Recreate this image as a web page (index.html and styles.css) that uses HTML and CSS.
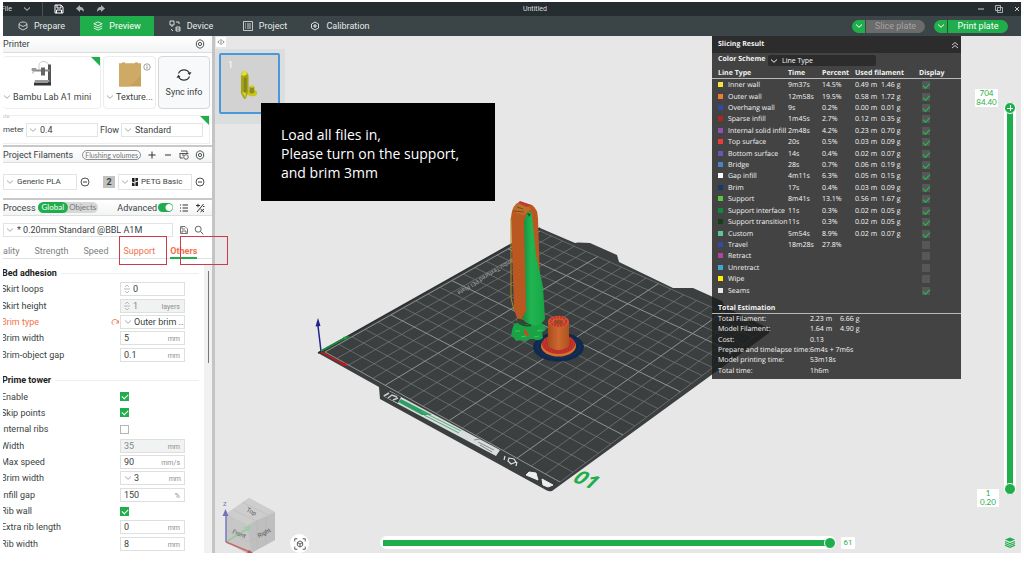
FILE: index.html
```html
<!DOCTYPE html>
<html lang="en">
<head>
<meta charset="utf-8">
<title>Untitled</title>
<link rel="stylesheet" href="styles.css">
</head>
<body>
<svg class="defs" aria-hidden="true">
  <symbol id="chev" viewBox="0 0 8 8"><path d="M1 2.5 4 5.3 7 2.5" fill="none" stroke="currentColor"/></symbol>
  <symbol id="minus-circle" viewBox="0 0 10 10"><circle cx="5" cy="5" r="4" fill="none" stroke="currentColor" stroke-width=".9"/><path d="M3 5h4" stroke="currentColor"/></symbol>
  <symbol id="gear" viewBox="0 0 10 10"><path d="M3.6 1.3 5 .7l1.4.6 1.5.9.7 1.3v3l-.7 1.3-1.5.9L5 9.3l-1.4-.6-1.5-.9-.7-1.3v-3l.7-1.3z" fill="none" stroke="currentColor" stroke-width=".9"/><circle cx="5" cy="5" r="1.6" fill="none" stroke="currentColor" stroke-width=".9"/></symbol>
  <symbol id="layers" viewBox="0 0 12 12"><path d="m6 1 5 2.3-5 2.3-5-2.3zM1 6l5 2.3L11 6M1 8.600l5 2.300 5-2.300" fill="none" stroke="currentColor" stroke-width="1"/></symbol>
  <symbol id="spin" viewBox="0 0 6 12"><path d="m1 4 2-2 2 2M0 6h6M1 8l2 2 2-2" fill="none" stroke="currentColor" stroke-width=".8"/></symbol>
</svg>
<div class="app">
  <header class="titlebar">
    <button class="file">File <svg class="i8"><use href="#chev"/></svg></button>
    <span class="sep"></span>
    <button aria-label="Save"><svg class="i10" viewBox="0 0 10 10"><path d="M1 1h6l2 2v6H1zM3 1v3h4V1M2.500 9V6h5v3" fill="none" stroke="#fff"/></svg></button>
    <button aria-label="Undo"><svg class="i10" viewBox="0 0 10 10"><path d="M1 4.500 5 1v2c3 0 4 2 4 5C8 6.500 7 6 5 6v2z" fill="#aab0b2"/></svg></button>
    <button aria-label="Redo"><svg class="i10" viewBox="0 0 10 10"><path d="M9 4.500 5 1v2C2 3 1 5 1 8c1-1.500 2-2 4-2v2z" fill="#aab0b2"/></svg></button>
    <h1>Untitled</h1>
    <span class="win">
      <button aria-label="Minimize"><svg class="i8" viewBox="0 0 8 8"><path d="M1 4h6" stroke="#ccc"/></svg></button>
      <button aria-label="Restore"><svg class="i8" viewBox="0 0 8 8"><path d="M.5.5h5v5h-5zM2.500 2.500h5v5h-5z" fill="none" stroke="#ccc" stroke-width=".8"/></svg></button>
      <button aria-label="Close"><svg class="i8" viewBox="0 0 8 8"><path d="m2 2 4 4M6 2 2 6" stroke="#ccc"/></svg></button>
    </span>
  </header>
  <nav class="tabs">
    <button><svg class="i10" viewBox="0 0 10 10"><path d="M5 1c2 0 4 1 4 2v4L5 9 1 7V3c0-1 2-2 4-2zM1 3.500l4 2 4-2" fill="none" stroke="currentColor" stroke-width=".8"/></svg>Prepare</button>
    <button class="on"><svg class="i10"><use href="#layers"/></svg>Preview</button>
    <button><svg class="i12" viewBox="0 0 12 12"><path d="M1 1h4v4H1zM3 5v2M7 2h3v2M2 9l2 2M7 7h4v4H7zM7 9h4" fill="none" stroke="currentColor" stroke-width=".9"/></svg>Device</button>
    <button><svg class="i10" viewBox="0 0 10 10"><path d="M.5.5h9v9h-9zM2 3h1M2 5h1M2 7h1M4 3h4M4 5h4M4 7h4" fill="none" stroke="currentColor" stroke-width=".8"/></svg>Project</button>
    <button><svg class="i10" viewBox="0 0 10 10"><path d="m5 1 3.500 2v4L5 9 1.500 7V3z" fill="none" stroke="currentColor" stroke-width=".9"/><path d="M5 3v4M3 5h4" stroke="currentColor"/></svg>Calibration</button>
    <div class="split off"><button aria-label="Slice options"><svg class="i8"><use href="#chev"/></svg></button><button>Slice plate</button></div>
    <div class="split"><button aria-label="Print options"><svg class="i8"><use href="#chev"/></svg></button><button>Print plate</button></div>
  </nav>
  <main>
    <aside>
      <div class="bar"><h2>Printer</h2><button class="end" aria-label="Printer settings"><svg class="i10"><use href="#gear"/></svg></button></div>
      <div class="cards">
        <button class="card printer">
          <svg class="pic" viewBox="0 0 26 28"><path d="M8 9V5q0-4 5-4 4 0 5 4" fill="none" stroke="#ccc"/><path d="M17 4h3v20h-3z" fill="#555"/><path d="M2 9h17v2H2z" fill="#888"/><path d="M10 7h4v8h-4z" fill="#666"/><path d="M3 22h17v3H3z" fill="#333"/><path d="M1 8h4v2H1zM4 20h14v1H4zM2 11v2" fill="#999" stroke="#999"/></svg>
          <span><svg class="i8"><use href="#chev"/></svg>Bambu Lab A1 mini</span><i class="corner"></i>
        </button>
        <button class="card plate">
          <svg class="pic" viewBox="0 0 26 28"><path d="M2 3h3V2h3v1h10V2h3v1h3v23H2z" fill="#c6a15a"/><path d="M2 3h22v12L12 26H2z" fill="#cfaa64"/></svg>
          <svg class="info" viewBox="0 0 8 8"><circle cx="4" cy="4" r="3.200" fill="none" stroke="#777" stroke-width=".7"/><path d="M4 3.500v2.200M4 2v.8" stroke="#666" stroke-width=".8"/></svg>
          <span><svg class="i8"><use href="#chev"/></svg>Texture...</span>
        </button>
        <button class="card sync"><svg class="i16" viewBox="0 0 16 16"><path d="M2.500 6.500a6 6 0 0 1 11 0M13.500 9.500a6 6 0 0 1-11 0" fill="none" stroke="#333" stroke-width="1.200"/><path d="m15.500 5-1.800 3.200L11.500 6zM.5 11l1.800-3.200L4.500 10z" fill="#333"/></svg>Sync info</button>
      </div>
      <div class="nozzle">
        <span class="legend">de</span>
        <label for="dia">meter</label><div class="combo"><svg class="i8"><use href="#chev"/></svg><select id="dia"><option>0.4</option></select></div>
        <label for="flow">Flow</label><div class="combo"><svg class="i8"><use href="#chev"/></svg><select id="flow"><option>Standard</option></select></div>
        <i class="corner"></i>
      </div>
      <div class="bar thick"><h2>Project Filaments</h2><button class="pill end">Flushing volumes</button>
        <button aria-label="Add filament"><svg class="i10" viewBox="0 0 10 10"><path d="M5 1.500v7M1.500 5h7" stroke="#333"/></svg></button>
        <button aria-label="Remove filament"><svg class="i10" viewBox="0 0 10 10"><path d="M2 5h6" stroke="#333"/></svg></button>
        <button aria-label="AMS sync"><svg class="i10" viewBox="0 0 10 10"><path d="M2 1h6v2M.5 3.500h9M1 3.500V8h3M3 5h2" fill="none" stroke="#444" stroke-width=".9"/><circle cx="7" cy="7" r="2.300" fill="none" stroke="#444" stroke-width=".8"/></svg></button>
        <button aria-label="Filament settings"><svg class="i10"><use href="#gear"/></svg></button></div>
      <div class="fils">
        <div class="combo"><svg class="i8"><use href="#chev"/></svg><select aria-label="Filament 1"><option>Generic PLA</option></select></div>
        <button aria-label="Remove 1"><svg class="i10"><use href="#minus-circle"/></svg></button>
        <b>2</b>
        <div class="combo"><svg class="i8"><use href="#chev"/></svg><svg class="logo" viewBox="0 0 6 8"><path d="M0 0h2.600v4.500L0 3.500zM3.400 0H6v2.500l-2.600 1zM0 4.500l2.600 1V8H0zM3.400 4.500 6 3.500V8H3.400z" fill="#222"/></svg><select aria-label="Filament 2"><option>PETG Basic</option></select></div>
        <button aria-label="Remove 2"><svg class="i10"><use href="#minus-circle"/></svg></button>
      </div>
      <div class="bar thick"><h2>Process</h2><div class="seg"><button class="on">Global</button><button>Objects</button></div>
        <label class="adv end">Advanced<input type="checkbox" class="switch" checked></label>
        <button aria-label="List"><svg class="i10" viewBox="0 0 10 10"><path d="M1 2h1M1 5h1M1 8h1M3.500 2H9M3.500 5H9M3.500 8H9" stroke="#333"/></svg></button>
        <button aria-label="Compare"><svg class="i10" viewBox="0 0 10 10"><path d="M8.500 1 2 9M1 2.500h4M3 .8v3.500M5.500 6l3.500 3M9 6 5.500 9M8 3.500h1.500" stroke="#333"/></svg></button></div>
      <div class="preset"><div class="combo"><svg class="i8"><use href="#chev"/></svg><select aria-label="Process preset"><option>* 0.20mm Standard @BBL A1M</option></select></div>
        <button aria-label="Save preset"><svg class="i8" viewBox="0 0 8 8"><path d="M.5.5H5l2.500 2.500v4.500h-7zM2 .5V3h3M2 7.500V5h4v2.500" fill="none" stroke="#555" stroke-width=".8"/></svg></button>
        <button aria-label="Search"><svg class="i10" viewBox="0 0 10 10"><circle cx="4.200" cy="4.200" r="3" fill="none" stroke="#555" stroke-width=".9"/><path d="m6.500 6.500 2.800 2.800" stroke="#555"/></svg></button></div>
      <div class="ptabs"><button>ality</button><button>Strength</button><button>Speed</button><button class="mod">Support</button><button class="mod cur">Others</button></div>
      <div class="params">
        <div class="plist">
          <section class="g1">
            <h3>Bed adhesion</h3>
            <div class="row"><label for="a1">Skirt loops</label><div class="val"><svg class="spin"><use href="#spin"/></svg><input id="a1" value="0"></div></div>
            <div class="row"><label for="a2">Skirt height</label><div class="val dis"><svg class="spin"><use href="#spin"/></svg><input id="a2" value="1" disabled><span>layers</span></div></div>
            <div class="row mod"><label for="a3">Brim type</label><button class="reset" aria-label="Reset"><svg class="i8" viewBox="0 0 8 8"><path d="M2.500 7A3 3 0 1 1 7 4.500M7.500 2.500V5H5" fill="none" stroke="currentColor" stroke-width=".9"/></svg></button><div class="val drop"><svg class="i8"><use href="#chev"/></svg><select id="a3"><option>Outer brim ...</option></select></div></div>
            <div class="row"><label for="a4">Brim width</label><div class="val"><input id="a4" value="5"><span>mm</span></div></div>
            <div class="row"><label for="a5">Brim-object gap</label><div class="val"><input id="a5" value="0.1"><span>mm</span></div></div>
          </section>
          <section class="g2">
            <h3>Prime tower</h3>
            <div class="row"><label for="b1">Enable</label><input type="checkbox" id="b1" checked></div>
            <div class="row"><label for="b2">Skip points</label><input type="checkbox" id="b2" checked></div>
            <div class="row"><label for="b3">Internal ribs</label><input type="checkbox" id="b3"></div>
            <div class="row"><label for="b4">Width</label><div class="val dis"><input id="b4" value="35" disabled><span>mm</span></div></div>
            <div class="row"><label for="b5">Max speed</label><div class="val"><input id="b5" value="90"><span>mm/s</span></div></div>
            <div class="row"><label for="b6">Brim width</label><div class="val drop"><svg class="i8"><use href="#chev"/></svg><input id="b6" value="3"><span>mm</span></div></div>
            <div class="row"><label for="b7">Infill gap</label><div class="val"><input id="b7" value="150"><span>%</span></div></div>
            <div class="row"><label for="b8">Rib wall</label><input type="checkbox" id="b8" checked></div>
            <div class="row"><label for="b9">Extra rib length</label><div class="val"><input id="b9" value="0"><span>mm</span></div></div>
            <div class="row"><label for="b10">Rib width</label><div class="val"><input id="b10" value="8"><span>mm</span></div></div>
          </section>
        </div>
        <div class="scroll"><i></i></div>
      </div>
    </aside>
    <div class="view">
      <svg class="scene" viewBox="215 36 806 517" preserveAspectRatio="xMinYMin meet">
        <defs>
          <pattern id="hatch" width="3" height="3" patternUnits="userSpaceOnUse" patternTransform="rotate(35)"><rect width="3" height="3" fill="#bf5a22"/><path d="M0 1h3" stroke="#a84c1a" stroke-width=".7"/></pattern>
          <pattern id="hatchr" width="2.400" height="3" patternUnits="userSpaceOnUse" patternTransform="rotate(15)"><rect width="3" height="3" fill="#d0342c"/><path d="M1 0v3" stroke="#8f2a24" stroke-width=".8"/></pattern>
          <linearGradient id="grn"><stop offset="0" stop-color="#128a3c"/><stop offset=".4" stop-color="#21b552"/><stop offset="1" stop-color="#17a546"/></linearGradient>
          <linearGradient id="cyl"><stop offset="0" stop-color="#a84d1c"/><stop offset=".5" stop-color="#cd6830"/><stop offset="1" stop-color="#b0521f"/></linearGradient>
        </defs>
        <path d="m318 353 222-125 35 15 3-.5 12 .5 27 12 2 7 54 26h20l29 13 3 6 45 22-1 4-217 158q-3 1-6-1L380 399l-1-12z" fill="#3b3f40"/>
        <g id="grid" fill="none"></g>
        <path d="m318 353 222-125" stroke="#2c2f30" stroke-width="1.500"/>
        <text class="platetext" transform="translate(516 256) rotate(149)">Bambu Textured PEI Plate</text>
        <g><path d="m383 396 7-5 110 59-4 6z" fill="#d9dddd"/><path d="m383 396 6-5 12 6-3 6z" fill="#3b3f40"/><path d="m384 396 5-3M388 398l4-3 5 2M393 400l5-2" stroke="#ccc" stroke-width="1.500" fill="none"/><path d="m401 399 31 16-10 0-24-13z" fill="#2f9e63"/><path d="m421 411 40 20M424 415l35 18" stroke="#58a97c" stroke-width="1"/><path d="m474 440 6-1M478 442l16 8M480 445l12 7" stroke="#888" stroke-width="1"/><path d="m505 456-1 4M517 462l-1 4M509 458l5 1 2 3-5 2-3-3z" fill="none" stroke="#ddd" stroke-width="1.200"/><path d="m529 472 7 1 2 7-12-5zM542 479l11 6-5 2-5-2z" fill="#eee" stroke="#eee" stroke-linejoin="round"/></g>
        <text class="plateno" transform="translate(571 481) rotate(22) skewX(-22)">01</text>
        <path d="M321 351 318 326" stroke="#22228c" stroke-width="1.500"/><path d="m318 318 2.500 8-5 .5z" fill="#22228c"/>
        <path d="m321 351 24-13" stroke="#16913c" stroke-width="1.500"/><path d="m350 336-5 4-2-3z" fill="#16a53f"/>
        <path d="m321 352 22 12" stroke="#c8161b" stroke-width="1.500"/><path d="m348 366-6 0 2-4z" fill="#c8161b"/>
        <ellipse cx="558.500" cy="347" rx="25.500" ry="14.500" fill="#10294d"/><ellipse cx="558.500" cy="347" rx="21" ry="11" fill="none" stroke="#163866" stroke-width=".7"/>
        <ellipse cx="558.500" cy="346" rx="17.500" ry="10.500" fill="#d9702e"/><ellipse cx="558.500" cy="344" rx="16.500" ry="10" fill="url(#hatchr)"/>
        <path d="M548 321v25q10 8 21 0v-25z" fill="url(#cyl)"/><ellipse cx="558.500" cy="321.500" rx="10.500" ry="5.800" fill="#d45a2f"/><ellipse cx="558.500" cy="321.500" rx="7.800" ry="4.200" fill="none" stroke="#c6283a" stroke-width="2" stroke-dasharray="2 1"/><ellipse cx="558.500" cy="322" rx="5" ry="2.600" fill="#9a4a22"/>
        <path d="M511 218q1-15 10-16l11 3q6 4 6 14l2 61-10 42-13-4-3-9z" fill="url(#hatch)"/>
        <path d="M511 218v80l3 12" fill="none" stroke="#a98a2b"/>
        <path d="m513 209 4-6 7 0 7 6-7 6-8-2z" fill="#b8702c"/><path d="m518 203 9 4 4-2-11-4z" fill="#c13831"/><path d="m514 211 10 1M517 207l6 2" stroke="#7f481e"/>
        <path d="m516 318 3 5 16 4-4 9-7-1-6-9z" fill="#b75420"/>
        <path d="M514 324q6-3 9 0l4 0q8-4 16 0l3 4q-1 4-4 4l1 6q-5 4-9 1l-5 0q-3 4-7 1l-6 1-2-3-3-2 1-6z" fill="#19a246"/><path d="m524 328 5 6-1 3-4-3z" fill="#b75420"/>
        <path d="m524 220 4-8q3-1 4 3l4 40 7 32 2 32q-5 8-12 6l-8-3-3-5q5-5 4-10z" fill="url(#grn)"/><path d="m527 213 4 1-2 3z" fill="#145c2c"/><path d="M517 321q6 6 14 4" stroke="#26502f" fill="none" stroke-width="2"/>
        <path d="m515 331 5 0M521 337l5-1M537 331l5-1M534 337l5-1" stroke="#38c968"/>
        <g><path d="m249 498 26 14v28l-24 13h-5l-20-11V514z" fill="#c6c6c6"/><path d="m249 498 26 14-27 13-22-11z" fill="#cdcdcd"/><path d="m248 525 27-13v28l-24 13z" fill="#bfbfbf"/><path d="m233 510 26 12M242 502l26 13M257 521v27M266 517v27M226 530l22 12 27-15" fill="none" stroke="#b7b7b7" stroke-width=".5"/>
        <path d="m226 542 21-13" stroke="#9ac7a0" stroke-width="1.500"/><path d="m251 526-3 6-4-5z" fill="#9acda2"/><path d="M226 542v-27" stroke="#7878c0" stroke-width="1.500"/><path d="m225.500 509 3 7h-6z" fill="#7373bd"/><path d="m226 542 24 10" stroke="#c86a6a" stroke-width="1.500"/><path d="m253 553-4-3-2 3z" fill="#c05050"/>
        <g class="cubetext"><text x="223" y="506" fill="#7373bd">Z</text><text x="252" y="525" fill="#a5cda9">Y</text><text transform="translate(246 511) rotate(28)">Top</text><text transform="translate(232 533) rotate(22)">Front</text><text transform="translate(259 538) rotate(-28)">Right</text></g></g>
      </svg>
      <button class="fold" aria-label="Collapse sidebar"><svg class="i8" viewBox="0 0 8 8"><path d="M4 1v6M2.500 2.500.8 4l1.700 1.500M5.500 2.500 7.200 4 5.500 5.500" fill="none" stroke="#888"/></svg></button>
      <div class="thumbs"><button class="thumb"><span>1</span><svg viewBox="0 0 60 60"><path d="M21 22q0-5 4-5 4 1 4 6v16l-3 7q-2 1-3-2l-2-4z" fill="#a5a318"/><path d="M21 21q2-5 5-4l2 3-4 2z" fill="#e2e030"/><path d="M24 24h3v15h-3z" fill="#87851c"/><path d="m22 39 4 1 0 5z" fill="#dedb22"/><ellipse cx="33" cy="40" rx="5" ry="3.500" fill="#c8c51d"/><path d="M30 33h5v7q-3 1-5 0z" fill="#8f8d1b"/><ellipse cx="32.500" cy="33" rx="2.500" ry="1.500" fill="#d9d625"/></svg></button></div>
      <section class="result">
        <header><h2>Slicing Result</h2><button aria-label="Collapse"><svg class="i8" viewBox="0 0 8 8"><path d="m1 4 3-2.500L7 4M1 7l3-2.500L7 7" fill="none" stroke="#ddd" stroke-width=".9"/></svg></button></header>
        <div class="scheme"><label for="cs">Color Scheme</label><div><svg class="i8"><use href="#chev"/></svg><select id="cs"><option>Line Type</option></select></div></div>
        <table><thead><tr><th class="c1">Line Type</th><th class="c2">Time</th><th class="c3">Percent</th><th class="c4">Used filament</th><th class="c6">Display</th></tr></thead><tbody id="lines"></tbody></table>
        <h3>Total Estimation</h3>
        <dl>
          <dt>Total Filament:</dt><dd><span>2.23 m</span>6.66 g</dd>
          <dt>Model Filament:</dt><dd><span>1.64 m</span>4.90 g</dd>
          <dt>Cost:</dt><dd>0.13</dd>
          <dt>Prepare and timelapse time:</dt><dd>6m4s + 7m6s</dd>
          <dt>Model printing time:</dt><dd>53m18s</dd>
          <dt>Total time:</dt><dd>1h6m</dd>
        </dl>
      </section>
      <div class="vslide"><input type="range" class="top" aria-label="Top layer" min="1" max="704" value="704"><input type="range" class="low" aria-label="Bottom layer" min="1" max="704" value="1"></div>
      <output class="tag t1">704<br>84.40</output><output class="tag t2">1<br>0.20</output>
      <button class="fit" aria-label="Fit view"><svg viewBox="0 0 16 16"><path d="M2 5V2h3M11 2h3v3M14 11v3h-3M5 14H2v-3M8 4.500l3 1.700v3.600l-3 1.700-3-1.700V6.200zM5 6.200l3 1.800 3-1.800M8 8v3.500" fill="none" stroke="#555" stroke-width="1.100"/></svg></button>
      <div class="hslide"><input type="range" aria-label="Move" min="0" max="61" value="61"><output>61</output></div>
      <button class="lay" aria-label="Layers"><svg viewBox="0 0 12 12"><path d="m6 .5 5.500 2.300L6 5.200.5 2.800z" fill="#1fae4b"/><path d="M.5 5 6 7.300 11.500 5M.5 7 6 9.300 11.500 7M.5 9 6 11.300 11.500 9" fill="none" stroke="#1fae4b" stroke-width="1.200"/></svg></button>
    </div>
  </main>
  <div class="mark m1"></div><div class="mark m2"></div>
  <p class="note">Load all files in,<br>Please turn on the support,<br>and brim 3mm</p>
</div>
<script src="app.js"></script>
</body>
</html>
```
FILE: styles.css
```css
* { box-sizing: border-box; }
body { margin: 0; background: #fff; font: 9px/12px Roboto, "Open Sans", sans-serif; color: #3a3f41; }
h1, h2, h3, p, dl, dd { margin: 0; font-size: inherit; font-weight: 400; }
button, input, select { font: inherit; color: inherit; background: none; border: 0; padding: 0; margin: 0; }
button { display: inline-flex; align-items: center; flex: none; }
select { appearance: none; flex: 1; min-width: 0; width: 100%; }
svg { display: block; flex: none; }
.defs { position: absolute; width: 0; height: 0; }
.i8 { width: 8px; height: 8px; }
.i10 { width: 10px; height: 10px; }
.i12 { width: 12px; height: 12px; }
.i16 { width: 16px; height: 16px; }
.app { position: relative; margin: 2px 3px 0; height: calc(100vh - 29px); display: flex; flex-direction: column; overflow: hidden; }
.end { margin-left: auto; }

.titlebar { position: relative; flex: none; height: 14px; background: #262d30; color: #ddd; display: flex; align-items: center; gap: 11px; font-size: 7px; overflow: hidden; }
.titlebar h1 { position: absolute; left: 0; right: 48px; text-align: center; padding-left: 94px; pointer-events: none; }
.file { gap: 11px; margin-left: -2px; }
.sep { width: 1px; height: 14px; background: #4b5255; }
.win { margin-left: auto; display: flex; gap: 10px; }

.tabs { flex: none; height: 20px; background: #3b4446; color: #e8eaea; display: flex; align-items: stretch; font-size: 9px; }
.tabs > button { width: 74px; justify-content: center; gap: 6px; }
.tabs > button:first-child { width: 77px; }
.tabs > button:nth-child(5) { width: 76px; }
.tabs .on { background: #1fae4b; color: #fff; }
.split { display: flex; align-self: center; height: 13px; border-radius: 7px; overflow: hidden; gap: 1px; margin-right: 9px; }
.split.off { margin-left: auto; }
.split + .split { margin-right: 13px; }
.split button { background: #1fae4b; color: #fff; justify-content: center; width: 60px; }
.split.off button { width: 59px; }
.split button:first-child, .split.off button:first-child { width: 13px; }
.split.off button:last-child { background: #6b6b6b; color: #a4a4a4; }

main { flex: 1; min-height: 0; display: flex; }
aside { flex: none; width: 212px; border-right: 3px solid #c4c4c4; background: #fff; display: flex; flex-direction: column; overflow: hidden; }
.bar { flex: none; height: 17px; background: linear-gradient(#fff, #f3f4f5); border-bottom: 1px solid #dcdddd; display: flex; align-items: center; gap: 6px; padding-right: 7px; white-space: nowrap; }
.bar.thick { height: 18px; border-top: 2px solid #c9c9c9; }
.cards { flex: none; display: grid; grid-template-columns: 98px 53px 52px; gap: 2px; padding: 3px 2px 0 0; height: 59px; }
.card { position: relative; height: 53px; border: 1px solid #eceded; border-radius: 4px; flex-direction: column; padding-top: 3px; font-size: 9px; }
.card .pic { width: 26px; height: 29px; }
.card span { display: flex; align-items: center; gap: 2px; margin-top: 2px; }
.card .i8, .combo .i8, .val .i8 { color: #aaa; }
.printer { border-left: 0; }
.printer .pic { margin-right: 16px; }
.printer span { align-self: flex-start; }
.sync { background: #f8f9fa; border-color: #d6d8d8; justify-content: center; gap: 3px; padding: 0; }
.info { position: absolute; top: 6px; right: 4px; width: 8px; height: 8px; }
.corner { position: absolute; top: 0; right: 0; border-top: 9px solid #1fae4b; border-left: 9px solid transparent; }
.nozzle { position: relative; flex: none; height: 29px; margin: 3px 2px 1px 0; border: 1px solid #eee; border-left: 0; display: grid; grid-template-columns: 21px 72px 19px 82px; column-gap: 2px; align-items: center; }
.nozzle label { white-space: nowrap; font-size: 8px; }
.nozzle label:nth-of-type(2) { font-size: 9px; }
.legend { position: absolute; left: 0; top: -4px; font-size: 6px; line-height: 7px; color: #ccc; background: #fff; }
.combo { display: flex; align-items: center; gap: 3px; height: 14px; border: 1px solid #e2e3e3; background: #fff; padding-left: 2px; min-width: 0; }
.pill { height: 10px; border: 1px solid #8c8f90; border-radius: 5px; padding: 0 2px; font: 7px/8px Lato, sans-serif; color: #777; }
.fils { flex: none; display: grid; grid-template-columns: 74px 10px 22px 74px 10px; column-gap: 3px; align-items: center; height: 35px; padding-top: 2px; font-size: 8px; }
.fils .combo { height: 16px; }
.fils b { background: #c2c2c2; text-align: center; font-size: 9px; width: 12px; justify-self: end; }
.logo { width: 6px; height: 8px; }
.seg { display: flex; background: #d6d7d7; border-radius: 6px; height: 11px; font: 8px/11px Lato, sans-serif; margin-left: -4px; }
.seg button { padding: 0 2px 0 1px; color: #777; }
.seg .on { background: #1fae4b; color: #fff; border-radius: 6px; padding: 0 4px; }
.adv { display: flex; align-items: center; gap: 1px; }
.switch { appearance: none; width: 15px; height: 9px; border-radius: 5px; background: radial-gradient(circle at 11px 50%, #fff 3px, #1fae4b 4px); }
.preset { flex: none; display: flex; align-items: center; gap: 6px; height: 28px; padding: 0 8px 0 0; }
.preset .combo { flex: 1; margin-right: 1px; }
.ptabs { flex: none; height: 15px; border-bottom: 1px solid #e2e2e2; display: flex; gap: 15px; color: #7b7f80; }
.ptabs .mod, .row.mod label, .reset { color: #f5714a; }
.ptabs .cur { font-weight: 700; border-bottom: 2px solid #1fae4b; margin-bottom: -1px; }
.params { flex: 1; min-height: 0; display: flex; margin-top: 6px; }
.plist { flex: 1; min-width: 0; overflow: hidden; }
.scroll { width: 8px; background: #f1f1f1; padding: 6px 3px 0 4px; }
.scroll i { display: block; width: 1px; height: 92px; background: #777; }
.plist h3 { display: flex; align-items: center; gap: 4px; font-weight: 700; color: #222; margin: 0 5px 0 -1px; }
.plist h3::after { content: ""; flex: 1; height: 1px; background: #eee; }
section.g1, section.g2 { display: grid; grid-auto-rows: 1fr; }
.g1 { height: 98px; }
.g2 { height: 180px; margin-top: 9px; }
.row { display: grid; grid-template-columns: 109px 8px 65px; column-gap: 1px; align-items: center; margin-left: -3px; padding-left: 1px; }
.row label { white-space: nowrap; }
.row label + .val, .row label + input { grid-column: 3; }
.val { display: flex; align-items: center; height: 14px; border: 1px solid #dedfdf; padding: 0 4px 0 3px; gap: 2px; }
.val.drop { padding-right: 0; }
.val.drop span { padding-right: 3px; }
.val input { flex: 1; min-width: 0; width: 20px; }
.val span { color: #8b8f90; font-size: 7px; padding-top: 2px; }
.dis { background: #f1f2f2; color: #85898a; }
.spin { width: 6px; height: 12px; color: #aaa; margin-right: 1px; }
.row input[type=checkbox] { appearance: none; width: 9px; height: 9px; border: 1px solid #b5b5b5; position: relative; }
.row input:checked { background: #1fae4b; border-color: #1fae4b; }
.row input:checked::after { content: ""; position: absolute; left: 1px; top: 1px; width: 5px; height: 3px; border-left: 1px solid #fff; border-bottom: 1px solid #fff; transform: rotate(-45deg); }

.view { flex: 1; position: relative; background: #e7e7e7; overflow: hidden; }
.scene { position: absolute; left: 0; top: 0; width: 100%; }
.platetext { font: 6px Roboto, sans-serif; fill: #a5a8a8; }
.plateno { font: bold 20px "Open Sans", sans-serif; fill: #1fae4b; }
.cubetext { font: 6px Roboto, sans-serif; fill: #555; }
.fold { position: absolute; left: 1px; top: 1px; width: 10px; height: 10px; background: #fff; justify-content: center; }
.thumbs { position: absolute; left: 0; top: 13px; padding: 4px; width: 70px; height: 75px; background: #dbdede; }
.thumb { position: relative; width: 61px; height: 61px; border: 2px solid #4c97d8; border-radius: 2px; background: #d2d2d2; }
.thumb svg { width: 57px; height: 57px; }
.thumb span { position: absolute; left: 7px; top: 4px; color: #fff; }

.result { position: absolute; left: 497px; top: 0; width: 249px; padding-bottom: 3px; background: rgba(28, 28, 28, .81); color: #f4f4f4; font: 7px/9px "Open Sans", sans-serif; text-rendering: geometricPrecision; }
.result header { height: 17px; background: #2c2c2c; display: flex; align-items: center; justify-content: space-between; padding: 0 2px 0 6px; }
.result h2, .result h3, .scheme label, th { font-weight: 700; color: #f2f2f2; }
.scheme { display: flex; align-items: flex-start; height: 14px; padding: 2px 6px 0; gap: 5px; }
.scheme label { width: 45px; white-space: nowrap; }
.scheme div { width: 108px; height: 11px; background: #2c2c2c; border-radius: 2px; display: flex; align-items: center; padding-left: 2px; gap: 4px; }
.result table { width: 100%; border-collapse: collapse; table-layout: fixed; height: 229px; }
.result th, .result td { text-align: left; padding: 2px 0 0; white-space: nowrap; }
.result th:first-child, .result td:first-child { padding-left: 6px; }
.result td:last-child { padding-top: 1px; }
.c1 { width: 76px; } .c2 { width: 34px; } .c3 { width: 33px; } .c4 { width: 64px; } .c6 { width: 42px; }
thead tr { height: 11px; border-bottom: 1px solid #b9b9b9; }
tbody i { display: inline-block; width: 5px; height: 5px; margin-right: 5px; }
tbody td span { display: inline-block; width: 26px; }
tbody input { appearance: none; display: block; position: relative; width: 8px; height: 8px; margin-left: 3px; background: #555857; }
tbody input:checked::after { content: ""; position: absolute; left: 1px; top: 2px; width: 6px; height: 3px; border-left: 1px solid #1fc050; border-bottom: 1px solid #1fc050; transform: rotate(-45deg); }
.result h3 { padding: 2px 6px 0; margin-top: 6px; height: 12px; border-bottom: 1px solid #b9b9b9; }
.result dl { display: grid; grid-template-columns: 92px 1fr; grid-auto-rows: 1fr; height: 62px; padding: 0 0 0 6px; }
.result dt, .result dd { white-space: nowrap; padding-top: 1px; }
.result dd span { display: inline-block; width: 30px; }

.vslide { position: absolute; right: 5px; top: 66px; bottom: 58px; width: 12px; }
.vslide input { appearance: none; position: absolute; inset: 0; width: 12px; height: 100%; writing-mode: vertical-lr; direction: rtl; pointer-events: none; }
.vslide .top { background: linear-gradient(90deg, #fff 3px, #1fae4b 3px 9px, #fff 9px); border-radius: 6px; }
input[type=range]::-webkit-slider-thumb { appearance: none; pointer-events: auto; width: 12px; height: 12px; border-radius: 50%; background: #1fae4b; border: 1px solid #fff; }
.vslide .top::-webkit-slider-thumb { background: linear-gradient(#fff, #fff) center / 6px 1px no-repeat, linear-gradient(#fff, #fff) center / 1px 6px no-repeat, #1fae4b; }
.tag { position: absolute; background: #fff; color: #1fae4b; font: 8px/9px Lato, sans-serif; text-align: center; border-radius: 1px; }
.t1 { right: 23px; top: 53px; width: 23px; height: 18px; }
.t2 { right: 22px; bottom: 46px; width: 22px; height: 18px; }
.fit { position: absolute; left: 75px; bottom: 0; width: 19px; height: 19px; border-radius: 50%; background: #fff; justify-content: center; }
.fit svg { width: 14px; height: 14px; }
.hslide { position: absolute; left: 165px; right: 166px; bottom: 4px; display: flex; align-items: center; gap: 5px; }
.hslide input { appearance: none; flex: 1; min-width: 0; height: 13px; border-radius: 7px; background: linear-gradient(#1fae4b, #1fae4b) 3px 50% / calc(100% - 8px) 6px no-repeat #fff; }
.hslide output { width: 14px; background: #fff; color: #1fae4b; font-size: 8px; text-align: center; border-radius: 1px; }
.lay { position: absolute; right: 5px; bottom: 5px; width: 12px; height: 12px; }
.lay svg { width: 12px; height: 11px; }

.mark { position: absolute; top: 234px; height: 29px; border: 1px solid #cc3a4c; }
.m1 { left: 116px; width: 48px; }
.m2 { left: 177px; width: 48px; }
.note { position: absolute; left: 258px; top: 101px; width: 234px; height: 98px; background: #000; color: #fff; padding: 22px 19px 0 20px; font: 14px/19px "Open Sans", sans-serif; white-space: nowrap; }
```
FILE: app.js
```js
const rows = [
  ["#f7e33b", "Inner wall", "9m37s", "14.5%", "0.49 m", "1.46 g", 1],
  ["#f07a30", "Outer wall", "12m58s", "19.5%", "0.58 m", "1.72 g", 1],
  ["#3446a8", "Overhang wall", "9s", "0.2%", "0.00 m", "0.01 g", 1],
  ["#b0261e", "Sparse infill", "1m45s", "2.7%", "0.12 m", "0.35 g", 1],
  ["#8f50b0", "Internal solid infill", "2m48s", "4.2%", "0.23 m", "0.70 g", 1],
  ["#f03a3a", "Top surface", "20s", "0.5%", "0.03 m", "0.09 g", 1],
  ["#6658b0", "Bottom surface", "14s", "0.4%", "0.02 m", "0.07 g", 1],
  ["#4684c4", "Bridge", "28s", "0.7%", "0.06 m", "0.19 g", 1],
  ["#ffffff", "Gap infill", "4m11s", "6.3%", "0.05 m", "0.15 g", 1],
  ["#163a70", "Brim", "17s", "0.4%", "0.03 m", "0.09 g", 1],
  ["#5cc640", "Support", "8m41s", "13.1%", "0.56 m", "1.67 g", 1],
  ["#0e8a40", "Support interface", "11s", "0.3%", "0.02 m", "0.05 g", 1],
  ["#12401c", "Support transition", "11s", "0.3%", "0.02 m", "0.05 g", 1],
  ["#5cc890", "Custom", "5m54s", "8.9%", "0.02 m", "0.07 g", 1],
  ["#3848a8", "Travel", "18m28s", "27.8%", "", "", 0],
  ["#b044a0", "Retract", "", "", "", "", 0],
  ["#3aa8d8", "Unretract", "", "", "", "", 0],
  ["#fff000", "Wipe", "", "", "", "", 0],
  ["#e8e8e8", "Seams", "", "", "", "", 1]
];
document.getElementById("lines").innerHTML = rows.map(r =>
  `<tr><td><i style="background:${r[0]}"></i>${r[1]}</td><td>${r[2]}</td><td>${r[3]}</td><td><span>${r[4]}</span>${r[5]}</td><td><input type="checkbox" aria-label="Show ${r[1]}"${r[6] ? " checked" : ""}></td></tr>`
).join("");

// Projective map from the unit square to the four bed corners.
const [A, B, C, D] = [[325, 352], [560, 482], [763, 330], [540, 231]];
const sx = A[0] - B[0] + C[0] - D[0], sy = A[1] - B[1] + C[1] - D[1];
const x1 = B[0] - C[0], x2 = D[0] - C[0], y1 = B[1] - C[1], y2 = D[1] - C[1];
const det = x1 * y2 - x2 * y1;
const g = (sx * y2 - x2 * sy) / det, h = (x1 * sy - sx * y1) / det;
function bed(u, v) {
  const w = g * u + h * v + 1;
  return [0, 1].map(k => (((B[k] - A[k] + g * B[k]) * u + (D[k] - A[k] + h * D[k]) * v + A[k]) / w).toFixed(1)).join(" ");
}
let thin = "", bold = "";
for (let i = 0; i <= 18; i++) {
  const t = i / 18;
  const d = `M${bed(t, 0)}L${bed(t, 1)}M${bed(0, t)}L${bed(1, t)}`;
  if (i % 5) thin += d; else bold += d;
}
document.getElementById("grid").innerHTML =
  `<path d="${thin}" stroke="#777b7b" stroke-width=".7"/><path d="${bold}" stroke="#8f9393" stroke-width="1"/>`;
```
